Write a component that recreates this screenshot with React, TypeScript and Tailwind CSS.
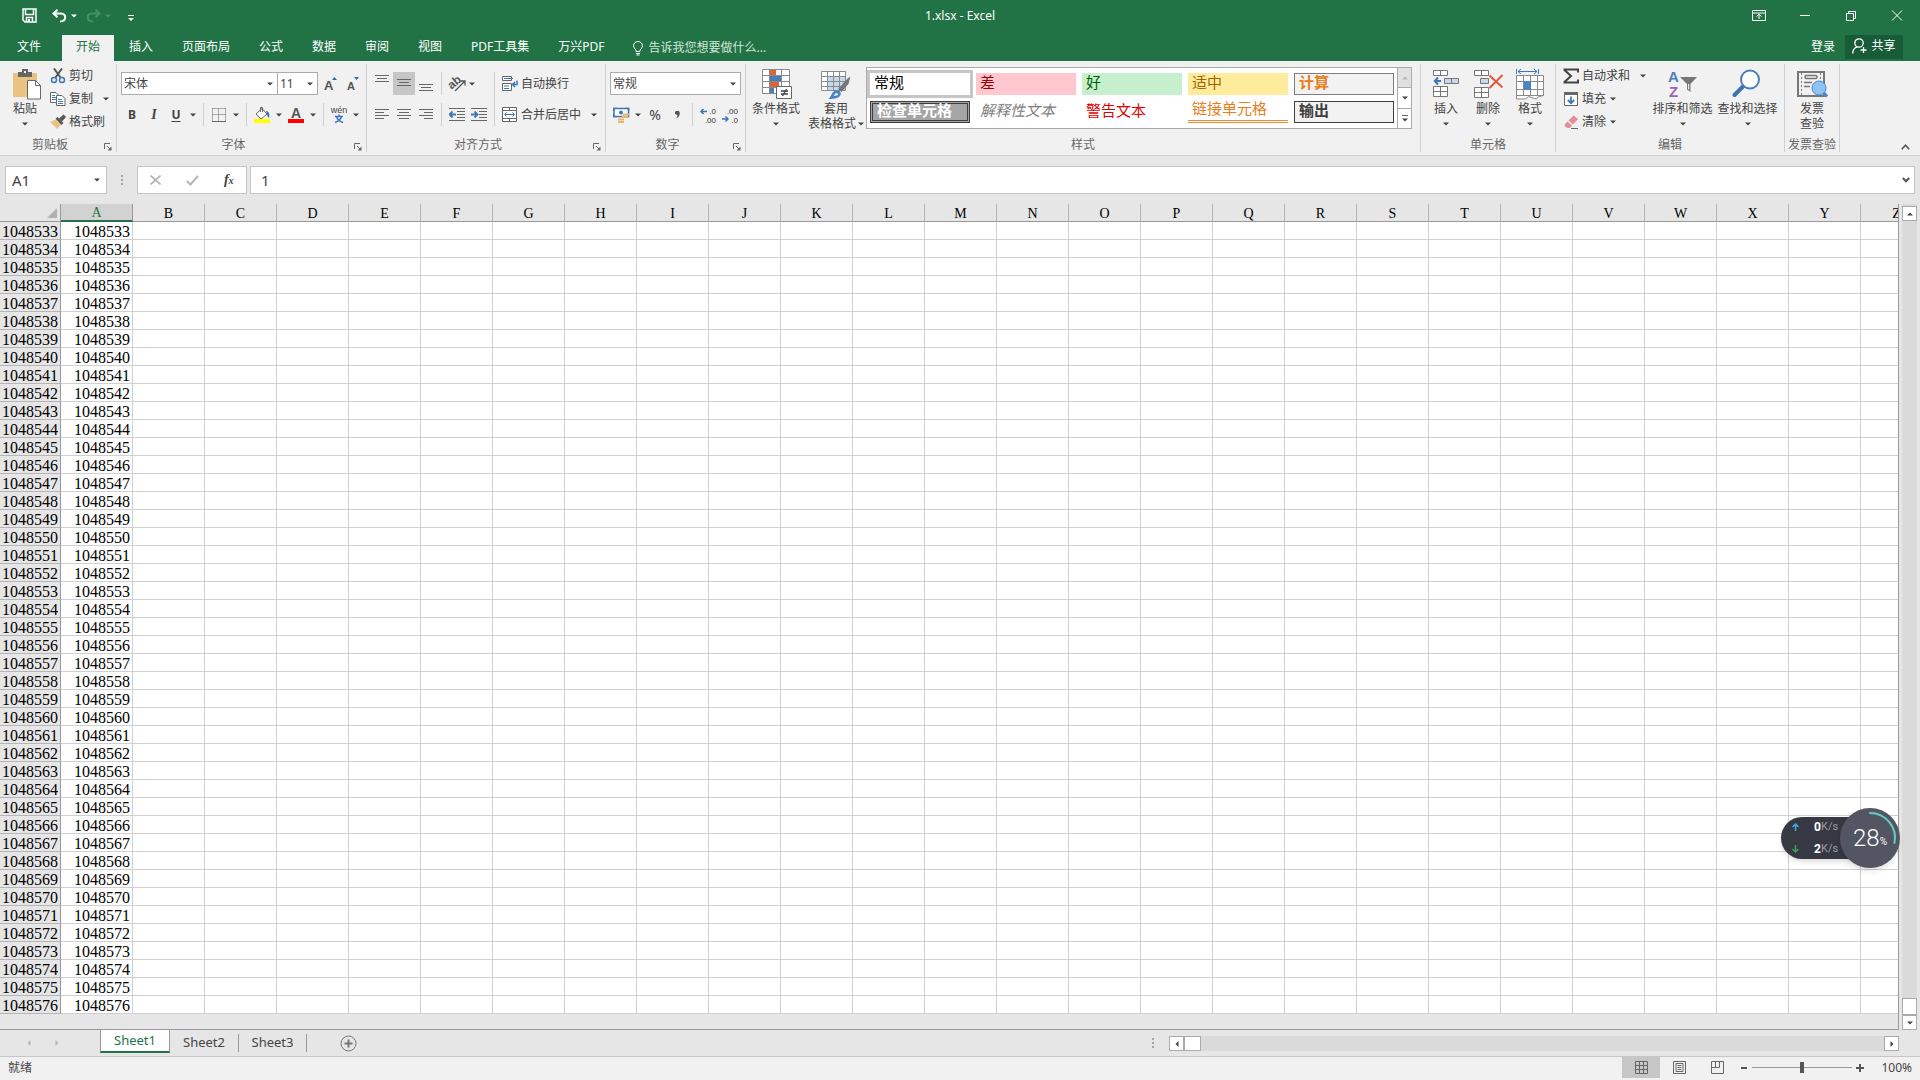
import { ReactNode } from 'react';
import clsx from 'clsx';

const FIRST_ROW = 1048533;
const ROWS = Array.from({ length: 44 }, (_, i) => FIRST_ROW + i);
const COLUMNS = 'ABCDEFGHIJKLMNOPQRSTUVWXYZ'.split('');
const TABS = ['插入', '页面布局', '公式', '数据', '审阅', '视图', 'PDF工具集', '万兴PDF'];

const STYLES = [
    { name: '常规', className: 'bg-white text-black outline-3 outline-[#c6c6c6]' },
    { name: '差', className: 'bg-[#ffc7ce] text-[#9c0006]' },
    { name: '好', className: 'bg-[#c6efce] text-[#006100]' },
    { name: '适中', className: 'bg-[#ffeb9c] text-[#9c6500]' },
    { name: '计算', className: 'border border-[#7f7f7f] bg-[#f2f2f2] font-bold text-[#e87d1a]' },
    { name: '检查单元格', className: 'border-3 border-double border-[#3f3f3f] bg-[#a5a5a5] font-bold text-white' },
    { name: '解释性文本', className: 'italic text-[#7f7f7f]' },
    { name: '警告文本', className: 'text-[#e00000]' },
    { name: '链接单元格', className: 'border-b-3 border-double border-[#ee8a2c] text-[#e87d1a]' },
    { name: '输出', className: 'border border-[#3f3f3f] bg-[#f2f2f2] font-bold text-[#3f3f3f]' },
];

export default function App() {
    return (
        <div className="flex h-screen flex-col overflow-hidden bg-[#e6e6e6] font-['Noto_Sans','Noto_Sans_CJK_SC',sans-serif] text-xs text-[#444]">
            <TitleBar />
            <TabBar />
            <Ribbon />
            <FormulaBar />
            <Sheet />
            <SheetTabs />
            <StatusBar />
            <SpeedWidget />
        </div>
    );
}

function TitleBar() {
    return (
        <header className="grid h-[35px] shrink-0 grid-cols-3 items-center bg-[#217346] pb-1 text-white">
            <div className="flex items-center pl-[18px]">
                <button aria-label="保存" className="flex w-[22px] justify-center">
                    <svg width="15" height="15" viewBox="0 0 15 15" fill="none" stroke="currentColor" strokeWidth="1.5">
                        <path d="M1 1h13v13H3l-2-2zM3.500 1v5.500h8V1M4.500 14v-4.500h6V14" />
                        <path d="M6 11h2v3H6z" fill="currentColor" stroke="none" />
                    </svg>
                </button>
                <button aria-label="撤消" className="ml-2 flex w-[22px] justify-center">
                    <UndoIcon />
                </button>
                <Caret className="w-2 text-white" />
                <button aria-label="恢复" className="ml-1 flex w-[22px] justify-center text-[#4a8f68]">
                    <UndoIcon className="-scale-x-100" />
                </button>
                <Caret className="w-2 text-[#4a8f68]" />
                <button aria-label="自定义快速访问工具栏" className="ml-4 pt-1">
                    <svg width="6" height="6" viewBox="0 0 6 6" fill="currentColor">
                        <path d="M0 0h6v1H0zM0 3h6L3 6z" />
                    </svg>
                </button>
            </div>
            <h1 className="text-center">1.xlsx - Excel</h1>
            <div className="flex justify-end">
                <WindowButton label="功能区显示选项">
                    <path d="M.5 1.500h13v10H.5zM.5 4h13M7 10V5.500M4.500 7.500 7 5.200l2.500 2.300" />
                </WindowButton>
                <WindowButton label="最小化">
                    <path d="M2 6.500h10" />
                </WindowButton>
                <WindowButton label="还原">
                    <path d="M2.500 4.500h7v7h-7zM4.500 4.500v-2h7v7h-2" />
                </WindowButton>
                <WindowButton label="关闭">
                    <path d="m2 1.500 10 10M12 1.500l-10 10" />
                </WindowButton>
            </div>
        </header>
    );
}

function WindowButton({ label, children }: { label: string; children: ReactNode }) {
    return (
        <button aria-label={label} className="flex w-[46px] justify-center">
            <svg width="14" height="13" viewBox="0 0 14 13" fill="none" stroke="currentColor">{children}</svg>
        </button>
    );
}

function UndoIcon({ className }: { className?: string }) {
    return (
        <svg className={className} width="15" height="14" viewBox="0 0 15 14" fill="none" stroke="currentColor" strokeWidth="2">
            <path d="M5.500 .8 1.500 4.500l4 3.700M2 4.500h7c6 0 5.500 8-1 8" />
        </svg>
    );
}

function TabBar() {
    return (
        <nav className="flex h-[26px] shrink-0 bg-[#217346] text-white">
            <button className="w-[62px] pr-1 pb-0.5 text-center">文件</button>
            <button className="mr-px w-[52px] bg-[#f1f1f1] pb-0.5 text-[#217346]">开始</button>
            <div className="flex gap-px">
                {TABS.map(tab => (
                    <button key={tab} className="px-3.5 pb-0.5">{tab}</button>
                ))}
            </div>
            <label className="ml-3.5 flex flex-1 items-center gap-1.5">
                <svg width="10" height="15" viewBox="0 0 10 15" fill="none" stroke="#fff">
                    <path d="M3 10.500V9C1.500 7.500.6 6.500.6 4.700a4.400 4.200 0 0 1 8.800 0C9.400 6.500 8.500 7.500 7 9v1.500zM3 12.500h4M3.500 14h3" />
                </svg>
                <input placeholder="告诉我您想要做什么..." className="w-40 bg-transparent placeholder:text-[#d3e5da]" />
            </label>
            <button className="px-2.5 pb-0.5">登录</button>
            <button className="mr-[17px] mb-0.5 flex w-[58px] items-center justify-center gap-1 bg-[#185c37] pb-0.5">
                <svg width="15" height="16" viewBox="0 0 15 16" fill="none" stroke="#fff" strokeWidth="1.300">
                    <circle cx="7" cy="5" r="4.200" />
                    <path d="M.8 15.500c0-3.500 2-6 4.500-6.600M11.500 9v6M8.500 12h6" />
                </svg>
                共享
            </button>
        </nav>
    );
}

function Ribbon() {
    return (
        <section className="flex h-[95px] shrink-0 border-b border-[#d0d0d0] bg-[#f1f1f1] py-[3px]">
            <Group title="剪贴板" launcher className="w-[117px]">
                <BigButton className="w-[50px]" label="粘贴" icon={<PasteIcon />} />
                <div className="flex flex-col">
                    <SmallButton label="剪切" icon={<CutIcon />} />
                    <SmallButton label="复制" icon={<CopyIcon />} caret />
                    <SmallButton label="格式刷" icon={<BrushIcon />} />
                </div>
            </Group>

            <Group title="字体" launcher className="w-[250px]">
                <div className="flex flex-col gap-2 pt-2 pl-1">
                    <div className="flex h-[23px]">
                        <Combo label="字体" value="宋体" className="w-[157px]" />
                        <Combo label="字号" value="11" className="-ml-px w-[41px]" />
                        <div className="ml-0.5 flex">
                            <IconButton label="增大字号">
                                <svg className="overflow-visible" width="16" height="16" viewBox="0 0 16 16">
                                    <text x="1" y="14" fontSize="13" fontWeight="700" fill="#555" fontFamily="Liberation Sans">A</text>
                                    <path d="M9 4 11.500 1 14 4z" fill="#2a6bb0" />
                                </svg>
                            </IconButton>
                            <IconButton label="减小字号">
                                <svg className="overflow-visible" width="16" height="16" viewBox="0 0 16 16">
                                    <text x="2" y="14" fontSize="11" fontWeight="700" fill="#555" fontFamily="Liberation Sans">A</text>
                                    <path d="M9 1h5l-2.500 3z" fill="#2a6bb0" />
                                </svg>
                            </IconButton>
                        </div>
                    </div>
                    <div className="flex h-[23px]">
                        <IconButton label="加粗"><b>B</b></IconButton>
                        <IconButton label="倾斜"><i className="font-['Liberation_Serif',serif] text-sm font-bold">I</i></IconButton>
                        <IconButton label="下划线"><b className="underline underline-offset-2">U</b></IconButton>
                        <Caret />
                        <Divider />
                        <IconButton label="边框">
                            <svg width="14" height="14" viewBox="0 0 14 14" stroke="#666" fill="none">
                                <path d="M.5.5h13M.5.5v13M13.500.5v13M6.500.5v13M.5 6.500h13" strokeDasharray="1 1" />
                                <path d="M0 13.500h14" />
                            </svg>
                        </IconButton>
                        <Caret />
                        <Divider />
                        <IconButton label="填充颜色">
                            <svg width="16" height="16" viewBox="0 0 16 16" fill="none">
                                <path d="M2 7 8 1.500 13 7l-6 5z" fill="#fff" stroke="#666" />
                                <path d="M6.500 5V.5h2V5" stroke="#666" />
                                <path d="M12 4c3 0 4 3 3 7-1-1-2-2-2-4z" fill="#3c77b8" />
                                <path d="M0 12h16v4H0z" fill="#ff0" />
                            </svg>
                        </IconButton>
                        <Caret />
                        <IconButton label="字体颜色">
                            <svg className="overflow-visible" width="16" height="16" viewBox="0 0 16 16">
                                <text x="3" y="11" fontSize="14" fontWeight="700" fill="#555" fontFamily="Liberation Sans">A</text>
                                <path d="M0 12h16v4H0z" fill="red" />
                            </svg>
                        </IconButton>
                        <Caret />
                        <Divider />
                        <IconButton label="显示或隐藏拼音字段">
                            <svg className="overflow-visible" width="16" height="16" viewBox="0 0 16 16">
                                <text x="8" y="6" textAnchor="middle" fontSize="9" fill="#444" fontFamily="Liberation Sans">wén</text>
                                <path d="M8 7.500v2M4 9.500h8M5.500 9.500C6 12 8 14 12 15.500M10.500 9.500C10 12 8 14 4 15.500" fill="none" stroke="#3c77b8" strokeWidth="1.400" />
                            </svg>
                        </IconButton>
                        <Caret />
                    </div>
                </div>
            </Group>

            <Group title="对齐方式" launcher className="w-[239px]">
                <div className="flex flex-col gap-2 pt-2 pl-1">
                    <div className="flex h-[23px]">
                        <IconButton label="顶端对齐"><Lines d="M0 .5h14M2 3.500h10M0 6.500h14" /></IconButton>
                        <IconButton label="垂直居中" active><Lines d="M0 4.500h14M2 7.500h10M0 10.500h14" /></IconButton>
                        <IconButton label="底端对齐"><Lines d="M0 9.500h14M2 12.500h10M0 15.500h14" /></IconButton>
                        <Divider />
                        <IconButton label="方向">
                            <svg className="overflow-visible" width="17" height="16" viewBox="0 0 17 16" fill="none" stroke="#555">
                                <text x="0" y="11" fontSize="12" fontWeight="700" stroke="none" fill="#555" fontFamily="Liberation Sans" transform="rotate(-40 5 9)">ab</text>
                                <path d="M6 15 15.500 5.500M11.500 5h4.500v4.500" strokeWidth="1.300" />
                            </svg>
                        </IconButton>
                        <Caret className="w-2" />
                    </div>
                    <div className="flex h-[23px]">
                        <IconButton label="左对齐"><Lines d="M0 3.500h14M0 6.500h9M0 9.500h14M0 12.500h9" /></IconButton>
                        <IconButton label="居中"><Lines d="M0 3.500h14M2 6.500h10M0 9.500h14M2 12.500h10" /></IconButton>
                        <IconButton label="右对齐"><Lines d="M0 3.500h14M5 6.500h9M0 9.500h14M5 12.500h9" /></IconButton>
                        <Divider />
                        <IconButton label="减少缩进量"><IndentIcon /></IconButton>
                        <IconButton label="增加缩进量"><IndentIcon forward /></IconButton>
                    </div>
                </div>
                <div className="my-2 flex"><Divider /></div>
                <div className="flex flex-col gap-2 pt-2 pl-[3px]">
                    <button className="flex h-[23px] items-center gap-[3px]">
                        <WrapIcon />自动换行
                    </button>
                    <button className="flex h-[23px] items-center gap-[3px]">
                        <MergeIcon />合并后居中<Caret className="ml-1 w-3" />
                    </button>
                </div>
            </Group>

            <Group title="数字" launcher className="w-[140px]">
                <div className="flex flex-1 flex-col gap-2 px-1 pt-2">
                    <Combo label="数字格式" value="常规" className="h-[23px]" />
                    <div className="flex h-[23px]">
                        <IconButton label="会计数字格式"><MoneyIcon /></IconButton>
                        <Caret />
                        <IconButton label="百分比样式"><span className="text-sm">%</span></IconButton>
                        <IconButton label="千位分隔样式">
                            <svg width="5" height="8" viewBox="0 0 5 8"><path d="M1 0h3l.8 2C4.800 5 3 7 1 7.500c1-1.200 1.500-2 1.400-3.500L0 3V1z" fill="#555" /></svg>
                        </IconButton>
                        <Divider />
                        <IconButton label="增加小数位数"><DecimalIcon top=".0" bottom=".00" /></IconButton>
                        <IconButton label="减少小数位数"><DecimalIcon top=".00" bottom=".0" decrease /></IconButton>
                    </div>
                </div>
            </Group>

            <Group title="样式" className="min-w-0 flex-1">
                <BigButton className="w-[60px]" label="条件格式" icon={<ConditionalIcon />} />
                <BigButton className="w-[60px]" label="套用" second="表格格式" icon={<TableFormatIcon />} />
                <div className="mt-[3px] mr-2 flex h-[62px] min-w-0 flex-1 border border-[#ababab] bg-white">
                    <div className="grid flex-1 grid-cols-5 gap-1.5 px-[3px] py-[5px] font-['Liberation_Serif','Noto_Sans_CJK_SC',serif] text-[15px]">
                        {STYLES.map(style => (
                            <button
                                key={style.name}
                                className={clsx('flex h-[22px] items-center pb-0.5 pl-1 text-left leading-none whitespace-nowrap', style.className)}
                            >
                                {style.name}
                            </button>
                        ))}
                    </div>
                    <div className="flex w-3.5 flex-col divide-y divide-[#ababab] border-l border-[#ababab]">
                        <button aria-label="上一行" className="flex flex-1 items-center justify-center bg-[#e1e1e1] text-[#b5b5b5]"><Arrow className="rotate-180" /></button>
                        <button aria-label="下一行" className="flex flex-1 items-center justify-center"><Arrow /></button>
                        <button aria-label="其他" className="flex flex-1 flex-col items-center justify-center gap-0.5">
                            <span className="h-px w-1.5 bg-[#666]" /><Arrow />
                        </button>
                    </div>
                </div>
            </Group>

            <Group title="单元格" className="w-[135px]">
                <div className="flex pl-1">
                    <BigButton className="w-[42px]" label="插入" icon={<InsertIcon />} />
                    <BigButton className="w-[42px]" label="删除" icon={<DeleteIcon />} />
                    <BigButton className="w-[42px]" label="格式" icon={<FormatIcon />} />
                </div>
            </Group>

            <Group title="编辑" className="w-[229px]">
                <div className="ml-[7px] flex w-[87px] flex-col">
                    <SmallButton
                        label="自动求和"
                        caret
                        icon={<path d="M15 4.500V1.500H1.500v.5L8 8l-6.500 6v.5H15v-3" fill="none" stroke="#444" strokeWidth="2" />}
                    />
                    <SmallButton
                        label="填充"
                        caret
                        icon={
                            <>
                                <path d="M1.500 1.500h13v13h-13z" fill="#fff" stroke="#666" />
                                <path d="M1 1h14v3H1z" fill="#666" />
                                <path d="M8 5.500V12M4.800 9 8 12.300 11.200 9" fill="none" stroke="#3c77b8" strokeWidth="1.800" />
                            </>
                        }
                    />
                    <SmallButton
                        label="清除"
                        caret
                        icon={
                            <>
                                <path d="m2 10 2.500-2.500 4.500 4L7 14H4.500L1.500 12z" fill="#e58c97" />
                                <path d="m5.500 6.500 5-5L15 5l-5 5.500z" fill="#e58c97" />
                                <path d="M8 14.500h7" stroke="#666" />
                            </>
                        }
                    />
                </div>
                <BigButton className="w-[65px]" label="排序和筛选" icon={<SortIcon />} />
                <BigButton className="w-[65px]" label="查找和选择" icon={<FindIcon />} />
            </Group>

            <Group title="发票查验" className="w-[55px]">
                <BigButton className="w-full" label="发票" second="查验" noCaret icon={<InvoiceIcon />} />
            </Group>

            <button aria-label="折叠功能区" className="flex w-20 items-end justify-end pr-2.5 pb-0.5">
                <svg width="9" height="6" viewBox="0 0 9 6" fill="none" stroke="#555" strokeWidth="1.600"><path d="m.8 5.200 3.700-4 3.700 4" /></svg>
            </button>
        </section>
    );
}

function Group({ title, launcher, className, children }: { title: string; launcher?: boolean; className?: string; children: ReactNode }) {
    return (
        <div className={clsx('flex shrink-0 flex-col border-r border-[#d0d0d0]', className)}>
            <div className="flex h-[70px]">{children}</div>
            <div className="flex h-[18px] items-center text-[#666]">
                <span className="flex-1 pt-1 text-center leading-4 whitespace-nowrap">{title}</span>
                {launcher ? (
                    <button aria-label={`${title}设置`} className="flex w-4 justify-center pt-2">
                        <svg width="8" height="8" viewBox="0 0 8 8" fill="none" stroke="#666">
                            <path d="M.5 6V.5H6M3 3l3 3" /><path d="M7.500 3.500v4h-4z" fill="#666" stroke="none" />
                        </svg>
                    </button>
                ) : null}
            </div>
        </div>
    );
}

function BigButton({ label, second, icon, noCaret, className }: { label: string; second?: string; icon: ReactNode; noCaret?: boolean; className?: string }) {
    return (
        <button className={clsx('flex shrink-0 flex-col items-center pt-[5px] leading-[15px] whitespace-nowrap', className)}>
            <svg className="overflow-visible" width="32" height="31" viewBox="0 0 32 31" fill="none">{icon}</svg>
            <span className="pt-px">{label}</span>
            <span className="flex h-[15px] items-center gap-0.5">{second}{noCaret ? null : <Arrow />}</span>
        </button>
    );
}

function SmallButton({ label, icon, caret }: { label: string; icon: ReactNode; caret?: boolean }) {
    return (
        <button className="flex h-[23px] items-center gap-[3px] whitespace-nowrap">
            <svg width="16" height="16" viewBox="0 0 16 16">{icon}</svg>
            {label}
            {caret ? <Caret className={label === '自动求和' || label === '复制' ? 'ml-1 w-3' : 'w-2'} /> : null}
        </button>
    );
}

function IconButton({ label, active, children }: { label: string; active?: boolean; children: ReactNode }) {
    return (
        <button aria-label={label} className={clsx('flex h-full w-[22px] items-center justify-center', active && 'bg-[#c6c6c6]')}>
            {children}
        </button>
    );
}

function Combo({ label, value, className }: { label: string; value: string; className?: string }) {
    return (
        <div className={clsx('relative border border-[#ababab] bg-white', className)}>
            <select aria-label={label} className="h-full w-full appearance-none pl-0.5 text-xs">
                <option>{value}</option>
            </select>
            <Arrow className="pointer-events-none absolute top-[9px] right-1" />
        </div>
    );
}

function Arrow({ className }: { className?: string }) {
    return (
        <svg className={clsx('shrink-0', className)} width="6" height="4" viewBox="0 0 6 4"><path d="M0 .5h6L3 3.500z" fill="currentColor" /></svg>
    );
}

function Caret({ className = 'w-3' }: { className?: string }) {
    return <span className={clsx('flex shrink-0 items-center justify-center', className)}><Arrow /></span>;
}

function Divider() {
    return <span className="mx-1 w-px self-stretch bg-[#d0d0d0]" />;
}

function Lines({ d }: { d: string }) {
    return <svg width="14" height="17" viewBox="0 0 14 17" stroke="#666" fill="none"><path d={d} /></svg>;
}

function IndentIcon({ forward }: { forward?: boolean }) {
    return (
        <svg width="16" height="13" viewBox="0 0 16 13" fill="none" stroke="#666">
            <path d="M0 .5h16M8 3.500h8M8 6.500h8M8 9.500h8M0 12.500h16" />
            <path d={forward ? 'M0 6.500h6M3.500 3.500l3 3-3 3' : 'M7 6.500H1M3.500 3.500l-3 3 3 3'} stroke="#3c77b8" strokeWidth="1.800" />
        </svg>
    );
}

function WrapIcon() {
    return (
        <svg width="16" height="16" viewBox="0 0 16 16" fill="none" stroke="#666">
            <path d="M.5.5h9v4h-9zM.5 7.500h9v7h-9z" fill="#fff" />
            <path d="M2 2.500h9M2 10h5M2 12.500h5" stroke="#3c77b8" />
            <path d="M15 4.500v4h-4M13 6l-2.500 2.500L13 11" stroke="#3c77b8" strokeWidth="1.500" />
        </svg>
    );
}

function MergeIcon() {
    return (
        <svg width="16" height="16" viewBox="0 0 16 16" fill="none" stroke="#666">
            <path d="M.5.5h14v14H.5zM.5 3.500h14M.5 11.500h14M7.500.5v3M7.500 11.500v3" fill="#fff" />
            <path d="M3 7.500h9M4.500 5.500l-2 2 2 2M10.500 5.500l2 2-2 2" stroke="#3c77b8" />
        </svg>
    );
}

function MoneyIcon() {
    return (
        <svg width="17" height="16" viewBox="0 0 17 16" fill="none">
            <path d="M1 1.500h14.500v8H1z" fill="#fff" stroke="#3c77b8" strokeWidth="1.600" />
            <path d="M0 .8h4L0 4zM16.300.8h-4l4 3.200zM0 10.200h4L0 7z" fill="#3c77b8" />
            <circle cx="8" cy="5.500" r="2" fill="#3c77b8" />
            <path d="M10 7.500h6M9 10h6M5 12.500h6M5 15h6" stroke="#eab56c" strokeWidth="1.800" />
        </svg>
    );
}

function DecimalIcon({ top, bottom, decrease }: { top: string; bottom: string; decrease?: boolean }) {
    return (
        <svg className="overflow-visible" width="16" height="16" viewBox="0 0 16 16" fill="#333">
            <text x="16" y="7" textAnchor="end" fontSize="8" fontFamily="Liberation Sans">{top}</text>
            <text x="16" y="16" textAnchor="end" fontSize="8" fontFamily="Liberation Sans">{bottom}</text>
            <path d={decrease ? 'M0 12h6M3.500 9.500 6 12l-2.500 2.500' : 'M7 4.500H1M3.500 2 1 4.500 3.500 7'} fill="none" stroke="#3c77b8" strokeWidth="1.500" />
        </svg>
    );
}

function PasteIcon() {
    return (
        <>
            <path d="M4 4h24v24H4z" fill="#eac282" />
            <path d="M9 3h4V0h6v3h4v5H9z" fill="#666" />
            <path d="M15 2h2v2h-2z" fill="#f1f1f1" />
            <path d="M18.500 11.500h8l5 5v13.500h-13z" fill="#fff" stroke="#666" />
            <path d="M26.500 11.500v5h5" stroke="#666" />
        </>
    );
}

function CutIcon() {
    return (
        <>
            <path d="m4 .5 6.500 9M12 .5l-6.500 9" stroke="#555" strokeWidth="2" fill="none" />
            <circle cx="4" cy="12" r="2.500" fill="none" stroke="#3c77b8" strokeWidth="1.500" />
            <circle cx="12" cy="12" r="2.500" fill="none" stroke="#3c77b8" strokeWidth="1.500" />
        </>
    );
}

function CopyIcon() {
    return (
        <>
            <path d="M.5 1.500H6L8.500 4v7.500h-8z" fill="#fff" stroke="#666" />
            <path d="M2 4.500h3M2 6.500h4M2 8.500h4" stroke="#3c77b8" />
            <path d="M6.500 4.500H12L15 7.500v7H6.500z" fill="#fff" stroke="#666" />
            <path d="M8 8.500h4M8 10.500h5M8 12.500h5" stroke="#3c77b8" />
        </>
    );
}

function BrushIcon() {
    return (
        <>
            <path d="M0 8 6 5.500l5 5L7.500 15z" fill="#eac282" />
            <path d="m5.500 4.500 2-1.500 6 6-2 2z" fill="#555" />
            <path d="m9 4.500 4.500-4L16 3l-4 4.500z" fill="#555" />
        </>
    );
}

function ConditionalIcon() {
    return (
        <>
            <path d="M2.500.5h27v24h-27z" fill="#fff" />
            <path d="M10 1h6v6h-6zM10 13h9v6h-9z" fill="#e0623a" />
            <path d="M10 7h11v6H10zM10 19h4v6h-4z" fill="#4a7ebb" />
            <path d="M2.500.5h27v24h-27zM2.500 6.500h27M2.500 12.500h27M2.500 18.500h27M9.500.5v24M21.500.5v24" stroke="#8a8a8a" />
            <path d="M16.500 17.500h15v12h-15z" fill="#fff" stroke="#666" />
            <path d="M21 22h7M21 25h7M26.500 20l-4 7" stroke="#444" strokeWidth="1.300" />
        </>
    );
}

function TableFormatIcon() {
    return (
        <>
            <path d="M1 2h24v19H1z" fill="#fff" />
            <path d="M7.500 7h18v14h-18z" fill="#c5d9ee" />
            <path d="M1.500 2.500h24v19h-24zM1.500 7.500h24M1.500 12.500h24M1.500 17.500h24M7.500 2.500v19M13.500 2.500v19M19.500 2.500v19" stroke="#8a8a8a" />
            <path d="m18 20 9-10c2-1.500 4-3 3-1l-1.500 6-7 8z" fill="#777" />
            <path d="M8 30c3-1 3-7 8-9 4 0 6 3 4 6-3 3-8 3-12 3z" fill="#4a86c5" />
            <path d="M14 27c0-3 4-4 4-1z" fill="#fff" />
        </>
    );
}

function InsertIcon() {
    return (
        <>
            <path d="M3.500 1.500h14v5h-14zM10.500 1.500v5M3.500 17.500h14v10h-14zM10.500 17.500v10M3.500 22.500h14" fill="#fff" stroke="#777" />
            <path d="M14.500 9.500h14v5h-14zM21.500 9.500v5" fill="#c5d9ee" stroke="#777" />
            <path d="M11 12H5M8 8.500 4.800 12 8 15.500" stroke="#3c77b8" strokeWidth="2" />
        </>
    );
}

function DeleteIcon() {
    return (
        <>
            <path d="M2.500 1.500h14v5h-14zM9.500 1.500v5M2.500 18.500h14v10h-14zM9.500 18.500v10M2.500 23.500h14" fill="#fff" stroke="#777" />
            <path d="M8.500 9.500h8v5h-8z" fill="#c5d9ee" stroke="#777" />
            <path d="m17.500 6.500 13 12M30.500 6 17.500 19" stroke="#e2583e" strokeWidth="2" />
        </>
    );
}

function FormatIcon() {
    return (
        <>
            <path d="M2.500 0v5M24.500 0v5M4 2.500h19M7 0 4 2.500 7 5M20 0l3 2.500L20 5" stroke="#3c77b8" />
            <path d="M2.500 6.500h27v20l-5 1-2 2.500-8-2.500-3 2.500h-9z" fill="#fff" stroke="#8a8a8a" />
            <path d="M9.500 6.500v20M16.500 6.500v20M23.500 6.500v20M2.500 12.500h27M2.500 20.500h27M2.500 26.500h27" stroke="#8a8a8a" />
            <path d="M10 12h7v9h-7z" fill="#4a86c5" />
        </>
    );
}

function SortIcon() {
    return (
        <>
            <text x="1" y="13" fontSize="15" fontWeight="700" fill="#4a7ebb" fontFamily="Liberation Sans">A</text>
            <text x="2" y="28" fontSize="15" fontWeight="700" fill="#9b63b8" fontFamily="Liberation Sans">Z</text>
            <path d="M13 8h17l-6.500 7v8L20 20.500V15z" fill="#777" />
            <path d="M21.700 15v5.500" stroke="#fff" />
        </>
    );
}

function FindIcon() {
    return (
        <>
            <path d="M11.500 17 2.500 26" stroke="#3f72ad" strokeWidth="4" strokeLinecap="round" />
            <circle cx="18" cy="10.500" r="9" fill="#fff" stroke="#4a7ebb" strokeWidth="2" />
        </>
    );
}

function InvoiceIcon() {
    return (
        <>
            <path d="M2 3h26v24H2z" stroke="#777" strokeWidth="2" />
            <path d="M5.500 4v22M24.500 4v12" stroke="#777" strokeDasharray="2 2" />
            <rect x="9" y="6.500" width="12" height="3" rx="1.500" stroke="#777" strokeWidth="1.500" />
            <path d="M8 13.500h8M8 17.500h6" stroke="#777" strokeWidth="1.500" />
            <path d="m27 23 4 4.500" stroke="#4a86c5" strokeWidth="3" />
            <circle cx="23" cy="19" r="7" fill="#8cc4f4" stroke="#4a86c5" />
        </>
    );
}

function FormulaBar() {
    return (
        <div className="flex h-12 shrink-0 items-start px-[5px] pt-2.5 text-[15px]">
            <div className="flex h-7 w-[102px] items-center border border-[#c6c6c6] bg-white pr-1.5">
                <input aria-label="名称框" defaultValue="A1" className="min-w-0 flex-1 pl-1.5" />
                <button aria-label="名称列表"><Arrow /></button>
            </div>
            <div className="flex h-7 w-[30px] flex-col items-center justify-center gap-0.5">
                <Dots />
            </div>
            <div className="flex h-7 w-[110px] items-center justify-around border border-[#c6c6c6] bg-white">
                <button aria-label="取消">
                    <svg width="11" height="10" viewBox="0 0 11 10" stroke="#b5b5b5" strokeWidth="1.600"><path d="m.5.5 10 9M10.500.5l-10 9" /></svg>
                </button>
                <button aria-label="输入">
                    <svg width="13" height="11" viewBox="0 0 13 11" fill="none" stroke="#b5b5b5" strokeWidth="2"><path d="m.8 6 3.700 3.500L12 .8" /></svg>
                </button>
                <button aria-label="插入函数" className="font-['Liberation_Serif',serif] text-sm leading-none font-bold italic">
                    f<span className="text-[10px]">x</span>
                </button>
            </div>
            <div className="ml-[3px] flex h-7 flex-1 items-center border border-[#c6c6c6] bg-white pr-1">
                <input aria-label="编辑栏" defaultValue="1" className="min-w-0 flex-1 pl-2.5" />
                <button aria-label="展开编辑栏">
                    <svg width="8" height="6" viewBox="0 0 8 6" fill="none" stroke="#555" strokeWidth="2"><path d="M.8 1 4 4.300 7.200 1" /></svg>
                </button>
            </div>
        </div>
    );
}

function Dots() {
    return (
        <>
            <span className="size-0.5 bg-[#a5a5a5]" />
            <span className="size-0.5 bg-[#a5a5a5]" />
            <span className="size-0.5 bg-[#a5a5a5]" />
        </>
    );
}

function Sheet() {
    return (
        <main className="flex min-h-0 flex-1">
            <div className="min-w-0 flex-1 overflow-hidden border-r border-b border-[#999]">
                <table className="w-[1933px] table-fixed border-separate border-spacing-0 font-['Liberation_Serif',serif] text-base leading-[15px] text-black">
                    <colgroup>
                        <col className="w-[61px]" />
                        {COLUMNS.map(c => <col key={c} className="w-[72px]" />)}
                    </colgroup>
                    <thead>
                        <tr className="h-[18px] text-sm leading-[14px]">
                            <th aria-label="全选" className="border-r border-b border-[#999] p-0">
                                <svg className="ml-auto" width="13" height="12" viewBox="0 0 13 12"><path d="M10 1v10H0z" fill="#b1b1b1" /></svg>
                            </th>
                            {COLUMNS.map(c => (
                                <th
                                    key={c}
                                    scope="col"
                                    className={clsx('border-r p-0 pt-0.5 font-normal', c === 'A' ? 'border-b-2 border-r-[#999] border-b-[#217346] bg-[#d2d2d2] text-[#217346]' : 'border-b border-r-[#b5b5b5] border-b-[#999]')}
                                >
                                    {c}
                                </th>
                            ))}
                        </tr>
                    </thead>
                    <tbody className="bg-white">
                        {ROWS.map(row => (
                            <tr key={row} className="h-[18px]">
                                <th scope="row" className="border-r border-b border-r-[#999] border-b-[#b5b5b5] bg-[#e6e6e6] p-0 pt-0.5 pr-0.5 text-right font-normal">{row}</th>
                                {COLUMNS.map(c => (
                                    <td key={c} className="border-r border-b border-[#d0d0d0] p-0 pt-0.5 pr-0.5 text-right">{c === 'A' ? row : null}</td>
                                ))}
                            </tr>
                        ))}
                    </tbody>
                </table>
            </div>
            <div className="mx-[3px] flex w-[15px] flex-col bg-[#dadada]">
                <button aria-label="向上滚动" className="mt-0.5 flex h-[15px] items-center justify-center border border-[#ababab] bg-white"><Arrow className="rotate-180" /></button>
                <div className="mt-auto h-[17px] border border-[#ababab] bg-white" />
                <button aria-label="向下滚动" className="flex h-[15px] items-center justify-center border border-[#ababab] bg-white"><Arrow /></button>
            </div>
        </main>
    );
}

function SheetTabs() {
    return (
        <div className="flex h-[27px] shrink-0 border-b border-[#c6c6c6] text-[13px]">
            <div className="flex w-[100px] items-center gap-[22px] pl-[26px] text-[#b5b5b5]">
                <button aria-label="上一个工作表"><Arrow className="rotate-90" /></button>
                <button aria-label="下一个工作表"><Arrow className="-rotate-90" /></button>
            </div>
            <button className="mb-[3px] w-[70px] border-x border-b-2 border-x-[#999] border-b-[#217346] bg-white text-[#217346]">Sheet1</button>
            <button className="my-1 w-[69px] border-r border-[#999] pb-1">Sheet2</button>
            <button className="my-1 w-[68px] border-r border-[#999] pb-1">Sheet3</button>
            <button aria-label="新工作表" className="px-[33px]">
                <svg width="17" height="17" viewBox="0 0 17 17" fill="none" stroke="#777">
                    <circle cx="8.500" cy="8.500" r="7.500" /><path d="M8.500 4.500v8M4.500 8.500h8" strokeWidth="2" />
                </svg>
            </button>
            <div className="ml-auto flex w-8 flex-col items-center justify-center gap-0.5"><Dots /></div>
            <div className="mt-1.5 mr-[21px] flex h-[15px] w-[38%] bg-[#dadada]">
                <button aria-label="向左滚动" className="flex w-[15px] items-center justify-center border border-[#ababab] bg-white"><Arrow className="rotate-90" /></button>
                <div className="w-[17px] border border-[#ababab] bg-white" />
                <button aria-label="向右滚动" className="ml-auto flex w-[15px] items-center justify-center border border-[#ababab] bg-white"><Arrow className="-rotate-90" /></button>
            </div>
        </div>
    );
}

function StatusBar() {
    return (
        <footer className="flex h-[23px] shrink-0 items-center bg-[#f1f1f1] pb-0.5 pl-2">
            <span className="flex-1">就绪</span>
            <ViewButton label="普通" active><path d="M.5.5h12v12H.5zM4.500.5v12M8.500.5v12M.5 4.500h12M.5 8.500h12" /></ViewButton>
            <ViewButton label="页面布局"><path d="M.5.5h12v12H.5zM3 2.500h7v8H3zM4.500 4.500h4M4.500 6.500h4M4.500 8.500h4" /></ViewButton>
            <ViewButton label="分页预览"><path d="M.5.5h12v12H.5zM4.500.5v6M8.500.5v6M.5 6.500h8" /></ViewButton>
            <button aria-label="缩小" className="flex w-4 justify-center"><span className="h-0.5 w-1.5 bg-[#555]" /></button>
            <input
                type="range"
                aria-label="显示比例"
                min={0}
                max={100}
                defaultValue={50}
                className="h-3 w-[100px] appearance-none bg-[linear-gradient(#999,#999)] bg-[length:100%_1px] bg-center bg-no-repeat [&::-webkit-slider-thumb]:h-[11px] [&::-webkit-slider-thumb]:w-1 [&::-webkit-slider-thumb]:appearance-none [&::-webkit-slider-thumb]:bg-[#555]"
            />
            <button aria-label="放大" className="flex w-4 justify-center">
                <svg width="8" height="8" viewBox="0 0 8 8" stroke="#555" strokeWidth="2"><path d="M4 0v8M0 4h8" /></svg>
            </button>
            <button className="w-[52px] pr-2 text-right">100%</button>
        </footer>
    );
}

function ViewButton({ label, active, children }: { label: string; active?: boolean; children: ReactNode }) {
    return (
        <button aria-label={label} className={clsx('flex h-full w-[38px] items-center justify-center', active && 'bg-[#c6c6c6]')}>
            <svg width="13" height="13" viewBox="0 0 13 13" fill="none" stroke="#666">{children}</svg>
        </button>
    );
}

// Floating network speed ball that sits over the sheet
function SpeedWidget() {
    return (
        <aside className="absolute right-5 bottom-[212px] flex items-center font-['Roboto',sans-serif]">
            <div className="flex h-[42px] w-[88px] flex-col justify-between rounded-l-full bg-[#363944] py-0.5 pl-[11px] text-[11px] leading-4 text-[#9a9ca5] shadow-md">
                <div className="flex items-center">
                    <SpeedArrow color="#3fa9e0" className="rotate-180" />
                    <span className="w-[22px] text-right text-xs font-bold text-white">0</span>K/s
                </div>
                <div className="flex items-center">
                    <SpeedArrow color="#39a34a" />
                    <span className="w-[22px] text-right text-xs font-bold text-white">2</span>K/s
                </div>
            </div>
            <div className="relative -ml-[29px] flex size-[60px] items-center justify-center rounded-full bg-[#545563] text-white shadow-md">
                <span className="text-2xl font-light">28</span>
                <span className="pt-2 text-[10px]">%</span>
                <svg className="absolute inset-0" width="60" height="60" viewBox="0 0 60 60" fill="none">
                    <path d="M30 5a25 25 0 0 1 24.500 30" stroke="#5fd0bd" strokeWidth="2" strokeLinecap="round" />
                </svg>
            </div>
        </aside>
    );
}

function SpeedArrow({ color, className }: { color: string; className?: string }) {
    return (
        <svg className={className} width="7" height="8" viewBox="0 0 7 8" fill="none" stroke={color} strokeWidth="1.500">
            <path d="M3.500 0v7M.5 4l3 3 3-3" />
        </svg>
    );
}
